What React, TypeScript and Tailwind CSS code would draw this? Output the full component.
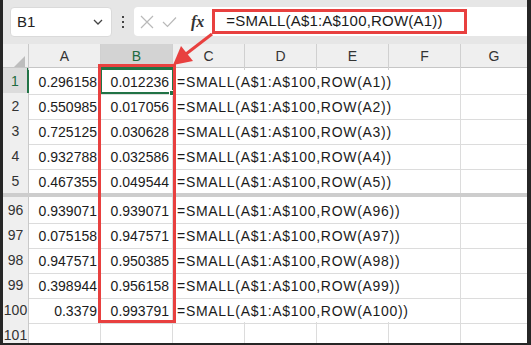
import React from 'react';

interface Row {
  n: string;
  a: string;
  b: string;
  ref: string;
}

const topRows: Row[] = [
  { n: '1', a: '0.296158', b: '0.012236', ref: 'A1' },
  { n: '2', a: '0.550985', b: '0.017056', ref: 'A2' },
  { n: '3', a: '0.725125', b: '0.030628', ref: 'A3' },
  { n: '4', a: '0.932788', b: '0.032586', ref: 'A4' },
  { n: '5', a: '0.467355', b: '0.049544', ref: 'A5' },
];

const bottomRows: Row[] = [
  { n: '96', a: '0.939071', b: '0.939071', ref: 'A96' },
  { n: '97', a: '0.075158', b: '0.947571', ref: 'A97' },
  { n: '98', a: '0.947571', b: '0.950385', ref: 'A98' },
  { n: '99', a: '0.398944', b: '0.956158', ref: 'A99' },
  { n: '100', a: '0.3379', b: '0.993791', ref: 'A100' },
];

const cols = ['A', 'B', 'C', 'D', 'E', 'F', 'G'];

const DataRow: React.FC<{ row: Row; selected?: boolean }> = ({ row, selected }) => (
  <div className="grid grid-cols-[26px_72px_72px_288px_66px] h-[25px] shrink-0">
    <div
      className={`flex justify-center leading-[24px] pt-[1px] border-b border-[#d5d5d5] ${
        selected
          ? 'bg-[#dcdcdc] text-[#1e6b40] border-r-2 border-r-[#217346]'
          : 'bg-[#efefef] text-[#333] border-r border-r-[#c9c9c9]'
      }`}
    >
      {row.n}
    </div>
    <div className="text-right pr-[3px] leading-[24px] pt-[2px] border-r border-b border-[#dcdcdc]">{row.a}</div>
    <div className="text-right pr-[3px] leading-[24px] pt-[2px] border-r border-b border-[#dcdcdc]">{row.b}</div>
    <div className="pl-[4px] leading-[24px] pt-[2px] whitespace-nowrap tracking-[0.7px] border-r border-b border-[#dcdcdc]">
      =SMALL(A$1:A$100,ROW({row.ref}))
    </div>
    <div className="border-b border-[#dcdcdc]" />
  </div>
);

export default function App() {
  return (
    <div
      className="relative w-[531px] h-[345px] bg-[#262626] pl-[3px] pr-[4px] pb-[2px] overflow-hidden text-[14px] text-[#1b1b1b]"
      style={{ fontFamily: '"Liberation Sans", Arial, sans-serif' }}
    >
      <div className="h-full flex flex-col bg-white overflow-hidden">
        {/* toolbar */}
        <div className="h-[44px] shrink-0 bg-[#e6e6e6] flex items-start pt-[7px]">
          <div className="ml-[7px] w-[102px] h-[30px] bg-white rounded-[4px] border border-[#dadada] flex items-center pl-[6px] pr-[8px]">
            <span className="text-[15px] text-[#222] flex-1">B1</span>
            <svg width="10" height="6" viewBox="0 0 10 6">
              <path d="M1 1 L5 5 L9 1" fill="none" stroke="#444" strokeWidth="1.3" />
            </svg>
          </div>
          <div className="w-[22px] h-[30px] flex flex-col items-center justify-center gap-[3px]">
            <span className="w-[2px] h-[2px] bg-[#444]" />
            <span className="w-[2px] h-[2px] bg-[#444]" />
            <span className="w-[2px] h-[2px] bg-[#444]" />
          </div>
          <div className="flex-1 h-[29px] bg-white rounded-l-[4px] flex items-center">
            <svg className="ml-[6px]" width="14" height="14" viewBox="0 0 14 14">
              <path d="M1 1 L13 13 M13 1 L1 13" stroke="#b9b9b9" strokeWidth="1.2" fill="none" />
            </svg>
            <svg className="ml-[8px]" width="15" height="12" viewBox="0 0 15 12">
              <path d="M1 6 L5.5 10.5 L14 1.5" stroke="#b9b9b9" strokeWidth="1.2" fill="none" />
            </svg>
            <span
              className="ml-[14px] text-[16px] italic font-bold text-[#333] leading-none"
              style={{ fontFamily: '"Liberation Serif", serif' }}
            >
              fx
            </span>
            <span className="ml-[22px] text-[15px] tracking-[0.2px] text-[#1b1b1b] whitespace-nowrap">
              =SMALL(A$1:A$100,ROW(A1))
            </span>
          </div>
        </div>

        {/* column headers */}
        <div className="grid grid-cols-[26px_72px_72px_72px_72px_72px_72px_66px] h-[24px] shrink-0 bg-[#efefef] border-b border-[#c6c6c6]">
          <div className="relative border-r border-[#c9c9c9]">
            <svg className="absolute right-[3px] bottom-[3px]" width="11" height="11" viewBox="0 0 11 11">
              <path d="M11 0 L11 11 L0 11 Z" fill="#bdbdbd" />
            </svg>
          </div>
          {cols.map((c) => (
            <div
              key={c}
              className={`flex justify-center leading-[24px] ${
                c === 'B' ? 'bg-[#d3d3d3] text-[#1e6b40] border-b-2 border-[#217346]' : 'text-[#333]'
              } ${c === 'G' ? '' : 'border-r border-r-[#d0d0d0]'}`}
            >
              {c}
            </div>
          ))}
        </div>

        {topRows.map((r, i) => (
          <DataRow key={r.n} row={r} selected={i === 0} />
        ))}

        <div className="h-[4px] shrink-0 bg-[#cdcdcd]" />

        {bottomRows.map((r) => (
          <DataRow key={r.n} row={r} />
        ))}

        <div className="grid grid-cols-[26px_72px_72px_72px_72px_72px_72px_66px] h-[25px] shrink-0">
          <div className="flex justify-center leading-[24px] pt-[1px] bg-[#efefef] text-[#333] border-r border-[#c9c9c9]">
            101
          </div>
          {cols.map((c) => (
            <div key={c} className={c === 'G' ? '' : 'border-r border-[#dcdcdc]'} />
          ))}
        </div>
      </div>

      {/* selection on B1 */}
      <div className="absolute left-[100px] top-[67px] w-[74px] h-[27px] border-2 border-[#217346]" />
      <div className="absolute left-[169px] top-[90px] w-[6px] h-[6px] bg-[#217346] border border-white" />

      {/* annotations */}
      <div className="absolute left-[212px] top-[9px] w-[255px] h-[25px] border-[3px] border-[#e8403f]" />
      <div className="absolute left-[98px] top-[64px] w-[78px] h-[259px] border-[3px] border-[#e8403f]" />
      <svg className="absolute left-0 top-0 pointer-events-none" width="531" height="345">
        <line x1="212" y1="34" x2="186" y2="54" stroke="#e8403f" strokeWidth="3" />
        <polygon points="173,65 181,46 193,61" fill="#e8403f" />
      </svg>
    </div>
  );
}
